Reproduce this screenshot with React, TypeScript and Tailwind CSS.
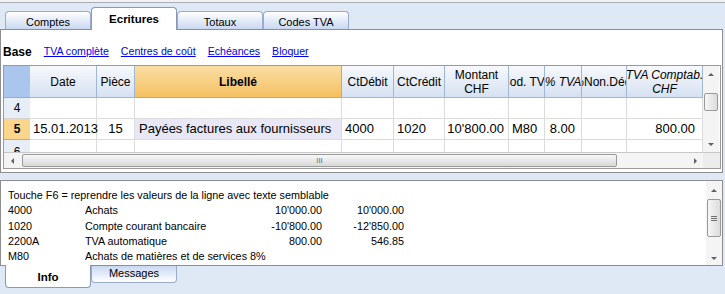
import React from "react";

const font = { fontFamily: '"Liberation Sans", Arial, sans-serif' };

const cols = [
  { key: "date", label: "Date", w: "w-[67px]" },
  { key: "piece", label: "Pièce", w: "w-[38px]" },
  { key: "lib", label: "Libellé", w: "w-[207px]" },
  { key: "deb", label: "CtDébit", w: "w-[52px]" },
  { key: "cred", label: "CtCrédit", w: "w-[51px]" },
  { key: "mont", label: "Montant CHF", w: "w-[64px]" },
  { key: "cod", label: "Cod. TVA", w: "w-[36px]" },
  { key: "pct", label: "% TVA", w: "w-[37px]" },
  { key: "nd", label: "%Non.Déd.", w: "w-[45px]" },
  { key: "tvac", label: "TVA Comptab. CHF", w: "w-[76px]" },
];

function TopTab({ label, active }: { label: string; active?: boolean }) {
  if (active) {
    return (
      <div className="relative z-10 -mb-px flex h-[23px] w-[86px] items-start justify-center rounded-t-[4px] border border-b-0 border-[#8a9ab4] bg-white pt-[3px] text-[11.5px] font-bold text-black">
        {label}
      </div>
    );
  }
  return (
    <div className="flex h-[18px] w-[86px] items-center justify-center rounded-t-[4px] border border-b-0 border-[#9aaccb] bg-gradient-to-b from-white to-[#c9d8f1] pt-[3px] text-[11px] text-black">
      {label}
    </div>
  );
}

function Up() {
  return <div className="h-0 w-0 border-x-[3px] border-b-[3px] border-x-transparent border-b-[#606060]" />;
}

function Down() {
  return <div className="h-0 w-0 border-x-[3px] border-t-[3px] border-x-transparent border-t-[#606060]" />;
}

function Grip() {
  return (
    <div className="flex flex-col gap-[1px]">
      <div className="h-px w-[6px] bg-[#707070]" />
      <div className="h-px w-[6px] bg-[#707070]" />
      <div className="h-px w-[6px] bg-[#707070]" />
    </div>
  );
}

export default function App() {
  return (
    <div className="h-[294px] w-[725px] overflow-hidden bg-[#dee9f5]" style={font}>
      <div className="h-[2px] bg-[#f2f2f2]" />
      <div className="h-px bg-[#a9adb5]" />
      {/* tab strip */}
      <div className="flex h-[26px] items-end pl-[5px]">
        <TopTab label="Comptes" />
        <TopTab label="Ecritures" active />
        <TopTab label="Totaux" />
        <TopTab label="Codes TVA" />
      </div>

      {/* main panel */}
      <div className="mr-[2px] h-[144px] border border-[#8e8e8e] bg-white">
        <div className="flex h-[35px] items-center gap-[12px] pl-[2px] pt-[8px] text-[10.6px]">
          <span className="text-[12px] font-bold text-black">Base</span>
          <span className="text-[#0000ee] underline">TVA complète</span>
          <span className="text-[#0000ee] underline">Centres de coût</span>
          <span className="text-[#0000ee] underline">Echéances</span>
          <span className="text-[#0000ee] underline">Bloquer</span>
        </div>

        <div className="ml-[2px] mr-[1px] flex h-[104px] flex-col border border-[#9a9a9a]">
          <div className="flex h-[86px]">
            <div className="flex w-[699px] flex-col overflow-hidden">
              {/* header */}
              <div className="flex h-[32px]">
                <div className="w-[26px] border-b border-[#93acd0] bg-[#abc6ec]" />
                {cols.map((c) => {
                  const lib = c.key === "lib";
                  const italic = c.key === "pct" || c.key === "tvac";
                  const two = c.key === "mont" || c.key === "tvac";
                  return (
                    <div
                      key={c.key}
                      className={`${c.w} flex shrink-0 items-center justify-center overflow-hidden whitespace-nowrap border-b border-r text-[12px] leading-[14px] text-black ${
                        lib
                          ? "border-[#f0a030] bg-gradient-to-b from-[#f9dea2] to-[#f5c060] font-bold"
                          : "border-[#9fb6d6] bg-gradient-to-b from-[#f7f9fc] to-[#d6e1f1]"
                      } ${italic ? "italic" : ""}`}
                    >
                      {two ? (
                        <div className="text-center">
                          <div>{c.label.replace(" CHF", "")}</div>
                          <div>CHF</div>
                        </div>
                      ) : (
                        c.label
                      )}
                    </div>
                  );
                })}
              </div>

              {/* row 4 */}
              <div className="flex h-[21px] text-[13px] text-black">
                <div className="flex w-[26px] items-center justify-center border-b border-[#d4d4d4] bg-[#e7eef8] text-[12px]">4</div>
                {cols.map((c) => (
                  <div key={c.key} className={`${c.w} shrink-0 border-b border-r border-[#dcdcdc]`} />
                ))}
              </div>

              {/* row 5 */}
              <div className="flex h-[21px] text-[13px] text-black">
                <div className="flex w-[26px] items-center justify-center border-b border-[#f2a03a] bg-[#fbd58c] text-[12px] font-bold">5</div>
                <div className="flex w-[67px] shrink-0 items-center border-b border-r border-[#dcdcdc] pl-[3px]">15.01.2013</div>
                <div className="flex w-[38px] shrink-0 items-center justify-center border-b border-r border-[#dcdcdc]">15</div>
                <div className="flex w-[207px] shrink-0 items-center border-b border-r border-[#dcdcdc] bg-[#e7e7f5] pl-[4px]">Payées factures aux fournisseurs</div>
                <div className="flex w-[52px] shrink-0 items-center border-b border-r border-[#dcdcdc] pl-[3px]">4000</div>
                <div className="flex w-[51px] shrink-0 items-center border-b border-r border-[#dcdcdc] pl-[3px]">1020</div>
                <div className="flex w-[64px] shrink-0 items-center justify-end border-b border-r border-[#dcdcdc] pr-[4px]">10'800.00</div>
                <div className="flex w-[36px] shrink-0 items-center border-b border-r border-[#dcdcdc] pl-[3px]">M80</div>
                <div className="flex w-[37px] shrink-0 items-center justify-end border-b border-r border-[#dcdcdc] pr-[6px]">8.00</div>
                <div className="w-[45px] shrink-0 border-b border-r border-[#dcdcdc]" />
                <div className="flex w-[76px] shrink-0 items-center justify-end border-b border-r border-[#dcdcdc] pr-[7px]">800.00</div>
              </div>

              {/* row 6 partial */}
              <div className="flex h-[12px] overflow-hidden text-[13px] text-black">
                <div className="flex w-[26px] items-start justify-center bg-[#e7eef8] pt-[3px] text-[12px]">6</div>
                {cols.map((c) => (
                  <div key={c.key} className={`${c.w} shrink-0 border-r border-[#dcdcdc]`} />
                ))}
              </div>
            </div>

            {/* vertical scrollbar */}
            <div className="flex h-[86px] w-[16px] flex-col items-center bg-[#f4f4f4]">
              <div className="flex h-[16px] w-full items-center justify-center">
                <Up />
              </div>
              <div className="mt-[11px] h-[18px] w-[14px] rounded-[2px] border border-[#9a9a9a] bg-gradient-to-r from-[#f6f6f6] to-[#dcdcdc]" />
              <div className="flex-1" />
              <div className="flex h-[16px] w-full items-center justify-center">
                <Down />
              </div>
            </div>
          </div>

          {/* horizontal scrollbar */}
          <div className="flex h-[16px] border-t border-[#c8c8c8] bg-[#f4f4f4]">
            <div className="flex w-[16px] items-center justify-center">
              <div className="h-0 w-0 border-y-[3px] border-r-[3px] border-y-transparent border-r-[#606060]" />
            </div>
            <div className="my-px ml-[2px] flex w-[595px] items-center justify-center rounded-[2px] border border-[#9a9a9a] bg-gradient-to-b from-[#f8f8f8] to-[#d8d8d8] text-[8px] leading-none text-[#707070]">
              III
            </div>
            <div className="flex-1" />
            <div className="flex w-[16px] items-center justify-center">
              <div className="h-0 w-0 border-y-[3px] border-l-[3px] border-y-transparent border-l-[#606060]" />
            </div>
            <div className="w-[17px] bg-[#ececec]" />
          </div>
        </div>
      </div>

      {/* info panel */}
      <div className="mr-[2px] mt-[7px] flex h-[86px] border border-[#8e8e8e] bg-white text-[10.8px] leading-[15.3px] text-black">
        <div className="flex-1 pl-[7px] pt-[7px]">
          <div>Touche F6 = reprendre les valeurs de la ligne avec texte semblable</div>
          {[
            ["4000", "Achats", "10'000.00", "10'000.00"],
            ["1020", "Compte courant bancaire", "-10'800.00", "-12'850.00"],
            ["2200A", "TVA automatique", "800.00", "546.85"],
            ["M80", "Achats de matières et de services 8%", "", ""],
          ].map((r) => (
            <div key={r[0]} className="flex whitespace-nowrap">
              <div className="w-[77px]">{r[0]}</div>
              <div className="w-[160px]">{r[1]}</div>
              <div className="w-[77px] text-right">{r[2]}</div>
              <div className="w-[82px] text-right">{r[3]}</div>
            </div>
          ))}
        </div>
        <div className="flex w-[16px] flex-col items-center bg-[#f4f4f4]">
          <div className="flex h-[18px] w-full items-center justify-center">
            <Up />
          </div>
          <div className="flex h-[38px] w-[14px] items-center justify-center rounded-[2px] border border-[#9a9a9a] bg-gradient-to-r from-[#f6f6f6] to-[#dcdcdc]">
            <Grip />
          </div>
          <div className="flex-1" />
          <div className="flex h-[14px] w-full items-center justify-center">
            <Down />
          </div>
        </div>
      </div>

      {/* bottom tabs */}
      <div className="flex items-start pl-[5px]">
        <div className="relative z-10 -mt-px flex h-[23px] w-[86px] items-center justify-center rounded-b-[4px] border border-t-0 border-[#8a9ab4] bg-white pt-[3px] text-[11.5px] font-bold text-black">
          Info
        </div>
        <div className="flex h-[17px] w-[86px] items-center justify-center rounded-b-[4px] border border-t-0 border-[#9aaccb] bg-gradient-to-b from-[#c9d8f1] to-white pb-[2px] text-[11px] text-black">
          Messages
        </div>
      </div>
    </div>
  );
}
